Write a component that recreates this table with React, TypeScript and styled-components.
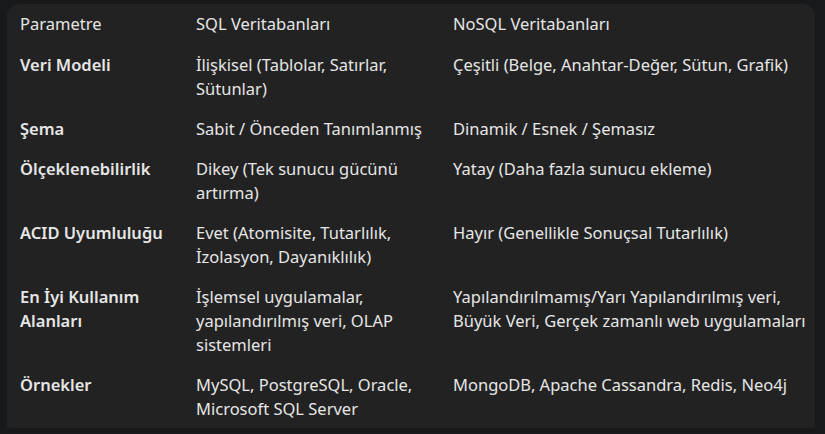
import styled, { createGlobalStyle } from "styled-components";

type Row = { param: string; sql: string; nosql: string };

const rows: Row[] = [
  {
    param: "Veri Modeli",
    sql: "İlişkisel (Tablolar, Satırlar, Sütunlar)",
    nosql: "Çeşitli (Belge, Anahtar-Değer, Sütun, Grafik)",
  },
  {
    param: "Şema",
    sql: "Sabit / Önceden Tanımlanmış",
    nosql: "Dinamik / Esnek / Şemasız",
  },
  {
    param: "Ölçeklenebilirlik",
    sql: "Dikey (Tek sunucu gücünü artırma)",
    nosql: "Yatay (Daha fazla sunucu ekleme)",
  },
  {
    param: "ACID Uyumluluğu",
    sql: "Evet (Atomisite, Tutarlılık, İzolasyon, Dayanıklılık)",
    nosql: "Hayır (Genellikle Sonuçsal Tutarlılık)",
  },
  {
    param: "En İyi Kullanım Alanları",
    sql: "İşlemsel uygulamalar, yapılandırılmış veri, OLAP sistemleri",
    nosql:
      "Yapılandırılmamış/Yarı Yapılandırılmış veri, Büyük Veri, Gerçek zamanlı web uygulamaları",
  },
  {
    param: "Örnekler",
    sql: "MySQL, PostgreSQL, Oracle, Microsoft SQL Server",
    nosql: "MongoDB, Apache Cassandra, Redis, Neo4j",
  },
];

const App = () => {
  return (
    <>
      <GlobalStyle />
      <Card>
        <Table>
          <HeaderCell>Parametre</HeaderCell>
          <HeaderCell>SQL Veritabanları</HeaderCell>
          <HeaderCell>NoSQL Veritabanları</HeaderCell>
          {rows.map((row) => (
            <Line key={row.param}>
              <Cell $bold>{row.param}</Cell>
              <Cell>{row.sql}</Cell>
              <Cell>{row.nosql}</Cell>
            </Line>
          ))}
        </Table>
      </Card>
    </>
  );
};

const GlobalStyle = createGlobalStyle`
  html, body {
    margin: 0;
    padding: 0;
    background: #18191b;
  }
  body {
    font-family: "Noto Sans", "Open Sans", sans-serif;
    -webkit-font-smoothing: antialiased;
  }
`;

const Card = styled.div`
  box-sizing: border-box;
  width: 808px;
  height: 424px;
  margin: 4px 0 0 7px;
  background: #222222;
  border-radius: 12px 12px 3px 3px;
  padding: 0 0 0 13px;
`;

const Table = styled.div`
  display: grid;
  grid-template-columns: 164px 245px 1fr;
  column-gap: 12px;
`;

const Line = styled.div`
  display: contents;
`;

const HeaderCell = styled.div`
  padding: 8px 0 9px;
  color: #e6e6e6;
  font-size: 16.5px;
  line-height: 24px;
`;

const Cell = styled.div<{ $bold?: boolean }>`
  padding: 8px 0;
  color: #e6e6e6;
  font-size: 16.5px;
  line-height: 24px;
  font-weight: ${(p) => (p.$bold ? 600 : 400)};
`;

export default App;
